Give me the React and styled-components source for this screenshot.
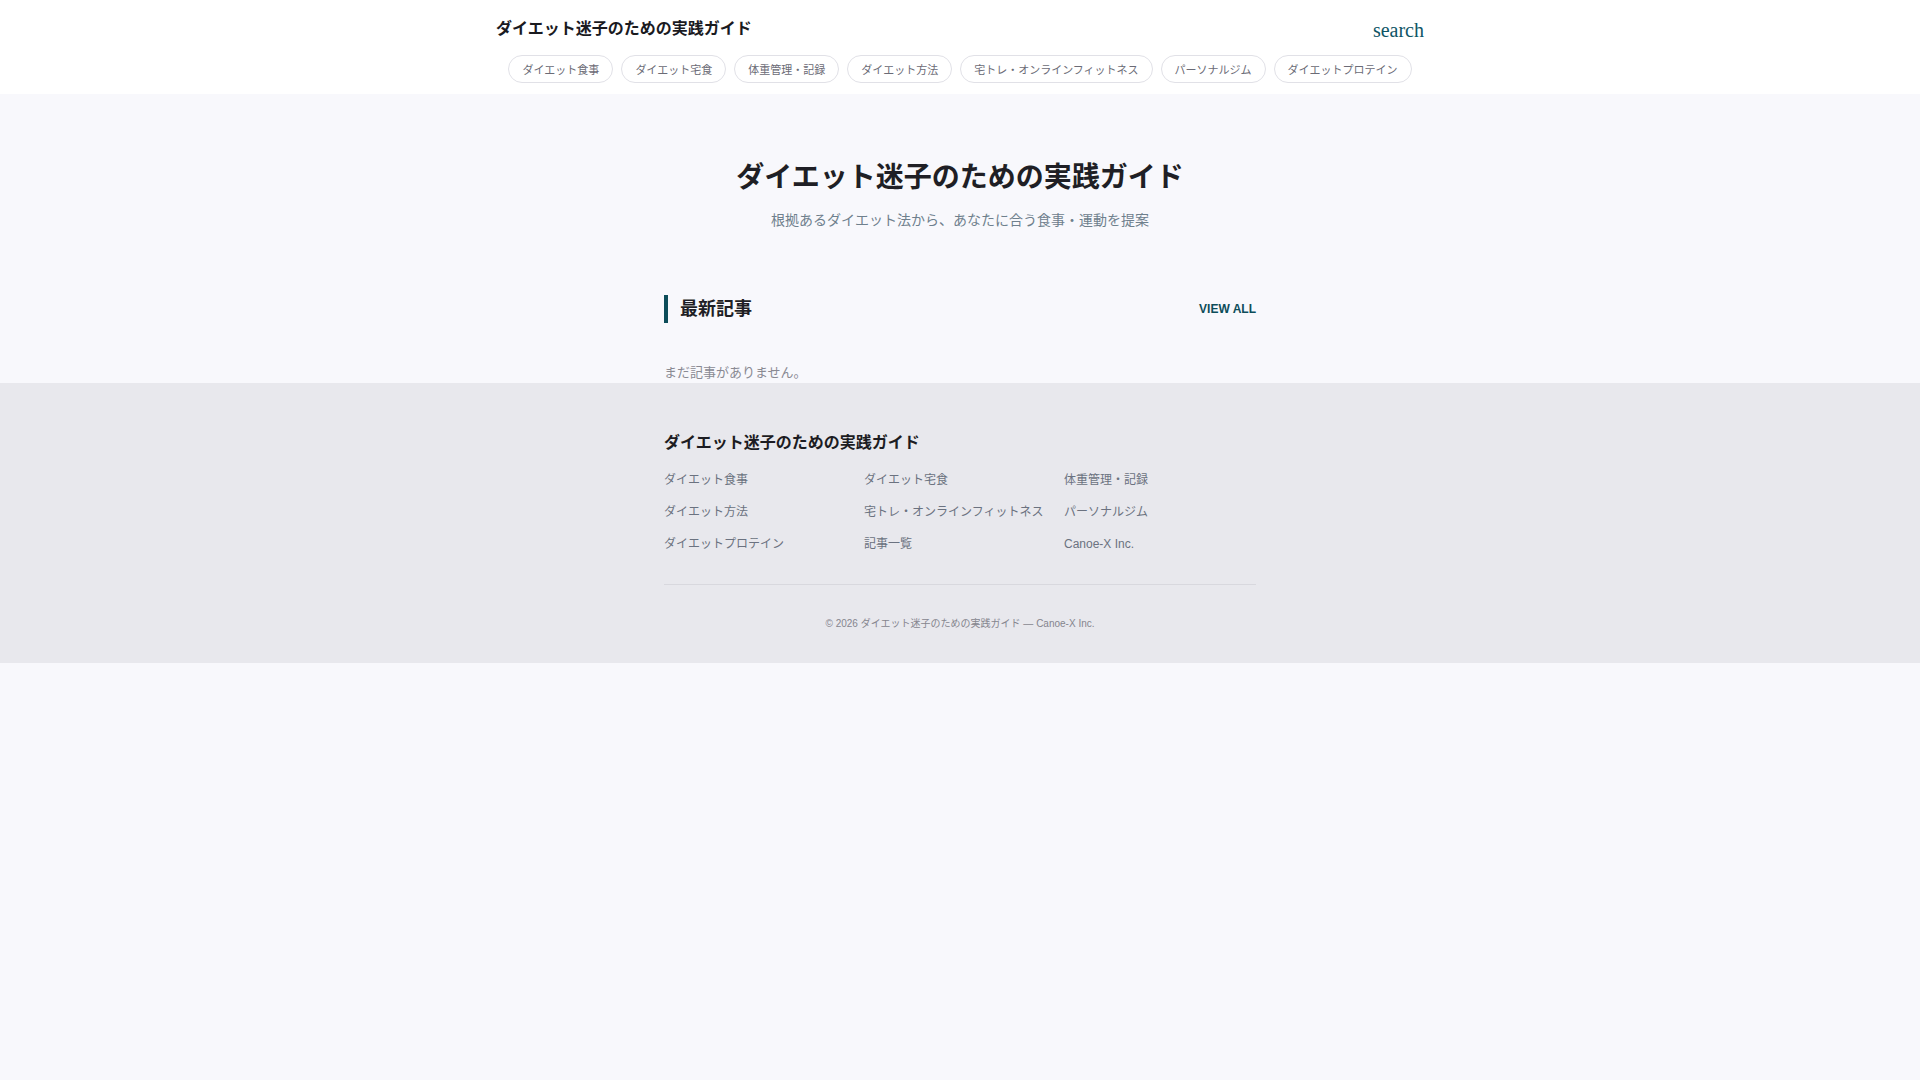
import React from 'react';
import styled, { createGlobalStyle } from 'styled-components';

const GlobalStyle = createGlobalStyle`
  html, body {
    margin: 0;
    padding: 0;
    background: #f8f8fc;
    font-family: "Liberation Sans", "Noto Sans CJK JP", sans-serif;
    color: #1c1c22;
  }
  * {
    box-sizing: border-box;
  }
`;

const Header = styled.header`
  background: #ffffff;
  padding: 14px 0 11px;
`;

const HeaderInner = styled.div`
  max-width: 960px;
  margin: 0 auto;
  padding: 0 16px;
`;

const TopRow = styled.div`
  display: flex;
  align-items: center;
  justify-content: space-between;
  height: 26px;
`;

const SiteTitle = styled.a`
  font-size: 16px;
  font-weight: 700;
  color: #1a1a1f;
  text-decoration: none;
`;

const SearchButton = styled.button`
  border: none;
  background: none;
  padding: 5px 0 0;
  font-family: "Liberation Serif", serif;
  font-size: 20px;
  line-height: 26px;
  color: #0e5566;
  cursor: pointer;
`;

const Nav = styled.nav`
  display: flex;
  justify-content: center;
  gap: 8px;
  margin-top: 15px;
`;

const Pill = styled.a`
  display: inline-flex;
  align-items: center;
  height: 28px;
  padding: 0 13px;
  border: 1px solid #e1e1e7;
  border-radius: 999px;
  font-size: 11px;
  color: #6b6b76;
  text-decoration: none;
  background: #fff;
`;

const Hero = styled.section`
  text-align: center;
  padding: 64px 24px 64px;
`;

const HeroTitle = styled.h1`
  margin: 0;
  font-size: 28px;
  line-height: 39px;
  font-weight: 700;
  color: #1f1f25;
`;

const HeroSub = styled.p`
  margin: 12px 0 0;
  font-size: 14px;
  line-height: 22px;
  color: #6f808d;
`;

const Container = styled.div`
  max-width: 640px;
  margin: 0 auto;
  padding: 0 24px;
`;

const SectionHead = styled.div`
  display: flex;
  align-items: center;
  justify-content: space-between;
`;

const SectionTitle = styled.h2`
  margin: 0;
  border-left: 4px solid #0d4d5a;
  padding-left: 12px;
  font-size: 18px;
  line-height: 28px;
  font-weight: 700;
  color: #1f1f25;
`;

const ViewAll = styled.a`
  font-size: 12px;
  font-weight: 700;
  color: #0d4d5a;
  text-decoration: none;
`;

const Empty = styled.p`
  margin: 40px 0 0;
  font-size: 13px;
  line-height: 20px;
  color: #8a8a93;
`;

const Footer = styled.footer`
  background: #e8e8ed;
  padding: 48px 0 0;
`;

const FooterTitle = styled.div`
  font-size: 16px;
  line-height: 24px;
  font-weight: 700;
  color: #1c1c22;
`;

const LinkGrid = styled.div`
  display: grid;
  grid-template-columns: repeat(3, 1fr);
  column-gap: 8px;
  row-gap: 14px;
  margin-top: 16px;
`;

const FooterLink = styled.a`
  font-size: 12px;
  line-height: 18px;
  color: #6b7280;
  text-decoration: none;
  white-space: nowrap;
`;

const Bottom = styled.div`
  margin-top: 31px;
  border-top: 1px solid #d8d8de;
  padding: 31px 0 31px;
  text-align: center;
  font-size: 10px;
  line-height: 16px;
  color: #85858e;
`;

const categories = [
  'ダイエット食事',
  'ダイエット宅食',
  '体重管理・記録',
  'ダイエット方法',
  '宅トレ・オンラインフィットネス',
  'パーソナルジム',
  'ダイエットプロテイン',
];

const footerLinks = [...categories, '記事一覧', 'Canoe-X Inc.'];

const siteName = 'ダイエット迷子のための実践ガイド';

export default function App() {
  return (
    <>
      <GlobalStyle />
      <Header>
        <HeaderInner>
          <TopRow>
            <SiteTitle href="#">{siteName}</SiteTitle>
            <SearchButton>search</SearchButton>
          </TopRow>
          <Nav>
            {categories.map((c) => (
              <Pill key={c} href="#">
                {c}
              </Pill>
            ))}
          </Nav>
        </HeaderInner>
      </Header>
      <main>
        <Hero>
          <HeroTitle>{siteName}</HeroTitle>
          <HeroSub>根拠あるダイエット法から、あなたに合う食事・運動を提案</HeroSub>
        </Hero>
        <Container>
          <SectionHead>
            <SectionTitle>最新記事</SectionTitle>
            <ViewAll href="#">VIEW ALL</ViewAll>
          </SectionHead>
          <Empty>まだ記事がありません。</Empty>
        </Container>
      </main>
      <Footer>
        <Container>
          <FooterTitle>{siteName}</FooterTitle>
          <LinkGrid>
            {footerLinks.map((l) => (
              <FooterLink key={l} href="#">
                {l}
              </FooterLink>
            ))}
          </LinkGrid>
          <Bottom>© 2026 {siteName} — Canoe-X Inc.</Bottom>
        </Container>
      </Footer>
    </>
  );
}
